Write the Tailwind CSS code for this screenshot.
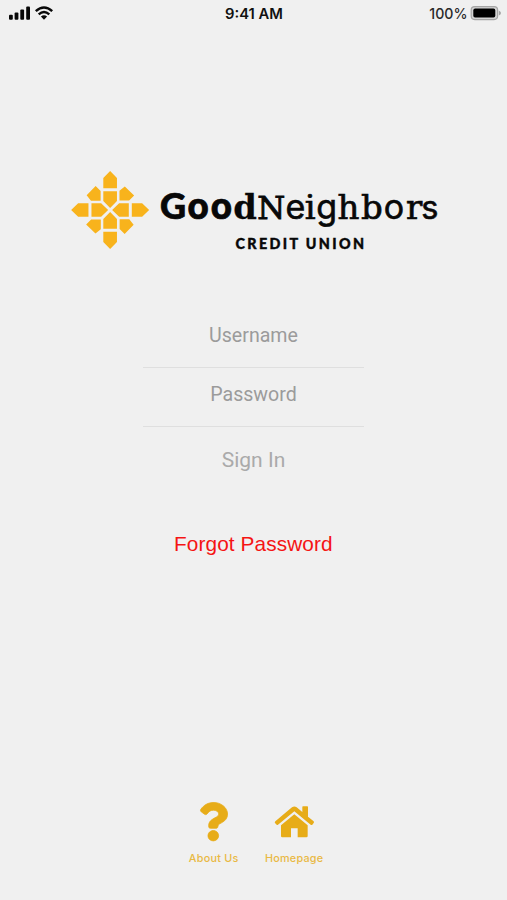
<!DOCTYPE html>
<html lang="en">
<head>
<meta charset="utf-8">
<title>GoodNeighbors Credit Union</title>
<script src="https://cdn.jsdelivr.net/npm/@tailwindcss/browser@4"></script>
</head>
<body class="bg-[#f0f0f0]">
<main class="flex h-[900px] w-[507px] flex-col overflow-hidden bg-[#f0f0f0] font-['Roboto',sans-serif]">
  <header class="h-[28px] shrink-0">
    <svg class="block" width="507" height="28" viewBox="0 0 507 28">
      <g fill="#080808">
        <rect x="9" y="14.8" width="3.8" height="5" rx="1"/>
        <rect x="14.6" y="12.4" width="3.8" height="7.4" rx="1"/>
        <rect x="20.3" y="9.6" width="3.8" height="10.2" rx="1"/>
        <rect x="26.2" y="6.6" width="3.8" height="13.2" rx="1"/>
        <path d="M44 19.7 40.9 16.5Q44 14.1 47.1 16.5Z"/>
      </g>
      <g fill="none" stroke="#080808" stroke-width="2.4">
        <path d="M35.8 11.2Q44 3.8 52.2 11.2"/>
        <path d="M38.7 14.4Q44 9.6 49.3 14.4"/>
      </g>
      <text x="225" y="19" textLength="58" lengthAdjust="spacingAndGlyphs" font-family="Inter" font-weight="600" font-size="14.5" fill="#111">9:41 AM</text>
      <text x="429.3" y="19" textLength="38.2" lengthAdjust="spacingAndGlyphs" font-family="Inter" font-weight="500" font-size="14.8" fill="#2a2a2a">100%</text>
      <rect x="471.2" y="6.6" width="26.4" height="13" rx="3.5" fill="#d4d4d4" stroke="#a5a5a5" stroke-width="1.2"/>
      <rect x="473.3" y="8.6" width="22" height="9" rx="1.8" fill="#000"/>
      <path d="M498.8 10.6Q501 11.6 501 13.1T498.8 15.6Z" fill="#a5a5a5"/>
    </svg>
  </header>

  <section class="mt-[137px] h-[90px] shrink-0">
    <svg class="block" width="507" height="90" viewBox="0 0 507 90" role="img">
      <g transform="translate(65.3 .3) scale(.33333)" fill="#f8b31c">
        <path id="a" d="M134.500 17 155 38V69H114V38ZM114 78H155V107L134.500 128 114 107ZM91 62 106 77V106H77L64 90Z"/>
        <use href="#a" transform="rotate(90 134.500 134)"/>
        <use href="#a" transform="rotate(180 134.500 134)"/>
        <use href="#a" transform="rotate(270 134.500 134)"/>
      </g>
      <g fill="#080808" stroke="#080808">
        <text x="160 187.200 210.400 233.200" y="54.300" font-family="Inter" font-weight="700" font-size="35.500" stroke-width=".7"><tspan font-family="Lato" font-weight="900" font-size="36">G</tspan>oo<tspan font-family="DejaVu Serif" font-weight="700" font-size="33.800" stroke-width=".3">d</tspan></text>
        <text x="257.300 285.400 304.800 316.300 337.500 361 383.700 406 421.300" y="54.300" font-family="Inter" font-size="34" stroke-width=".6"><tspan font-family="DejaVu Serif" font-size="32" stroke-width=".9">N</tspan>e<tspan font-family="DejaVu Serif" font-size="34" stroke-width=".7">i</tspan>g<tspan font-family="DejaVu Serif" font-size="34" stroke-width=".7">hb</tspan>o<tspan font-family="DejaVu Serif" font-size="34" stroke-width=".7">r</tspan><tspan font-size="32.500">s</tspan></text>
        <text x="235.500" y="83.800" textLength="128.500" font-family="Lato" font-weight="900" font-size="14.300" stroke-width=".4">CREDIT UNION</text>
      </g>
    </svg>
  </section>

  <form class="mx-auto mt-[54px] flex w-[221px] shrink-0 flex-col text-center text-[19.6px] text-[#9b9b9b]">
    <div class="h-[59px] border-b border-[#dfdfdf] pt-[12px] leading-[30px]">Username</div>
    <div class="h-[59px] border-b border-[#dfdfdf] pt-[12px] leading-[30px]">Password</div>
    <div class="pt-[18px] text-[21px] leading-[30px] text-[#aaa]">Sign In</div>
  </form>
  <div class="mt-[54px] h-[30px] shrink-0">
    <svg class="block" width="507" height="30">
      <text x="174" y="21.600" textLength="158.500" font-family="Liberation Sans" font-size="20.800" fill="#f51414">Forgot Password</text>
    </svg>
  </div>

  <nav class="mt-auto flex h-[105px] shrink-0 pl-[180px]">
    <svg class="block" width="155" height="75" viewBox="0 0 155 75" fill="#e7ac18">
      <g transform="translate(18.500 7.500) scale(.077 .075)">
        <path d="M202.021 0C122.202 0 70.503 32.703 29.914 91.026c-7.363 10.580-5.093 25.086 5.178 32.874l43.138 32.709c10.373 7.865 25.132 6.026 33.253-4.148 25.049-31.381 43.630-49.449 82.757-49.449 30.764 0 68.816 19.799 68.816 49.631 0 22.552-18.617 34.134-48.993 51.164-35.423 19.860-82.299 44.576-82.299 106.405V320c0 13.255 10.745 24 24 24h72.471c13.255 0 24-10.745 24-24v-5.773c0-42.860 125.268-44.645 125.268-160.627C377.504 66.256 286.902 0 202.021 0zM192 373.459c-38.196 0-69.271 31.075-69.271 69.271 0 38.195 31.075 69.270 69.271 69.270s69.271-31.075 69.271-69.271-31.075-69.270-69.271-69.270z" stroke="#e7ac18" stroke-width="10"/>
      </g>
      <g transform="translate(0 -.7) scale(.33333)">
        <path d="M285 86Q283 84 286 81L336 39Q343 34 350 39L367 53V38Q367 36 369 36H382Q384 36 384 38V67L401 81Q403 84 401 86L397 91Q395 93 392 91L343 51 294 91Q292 93 290 91Z"/>
        <path d="M303 93 343 60 383 93V125Q383 129 379 129H353V102H333V129H307Q303 129 303 125Z"/>
      </g>
      <g font-family="Inter" font-weight="500" font-size="10.800" fill="#e9b944">
        <text x="8.800" y="66.700" textLength="49.500">About Us</text>
        <text x="85" y="66.700" textLength="58">Homepage</text>
      </g>
    </svg>
  </nav>
</main>
</body>
</html>
